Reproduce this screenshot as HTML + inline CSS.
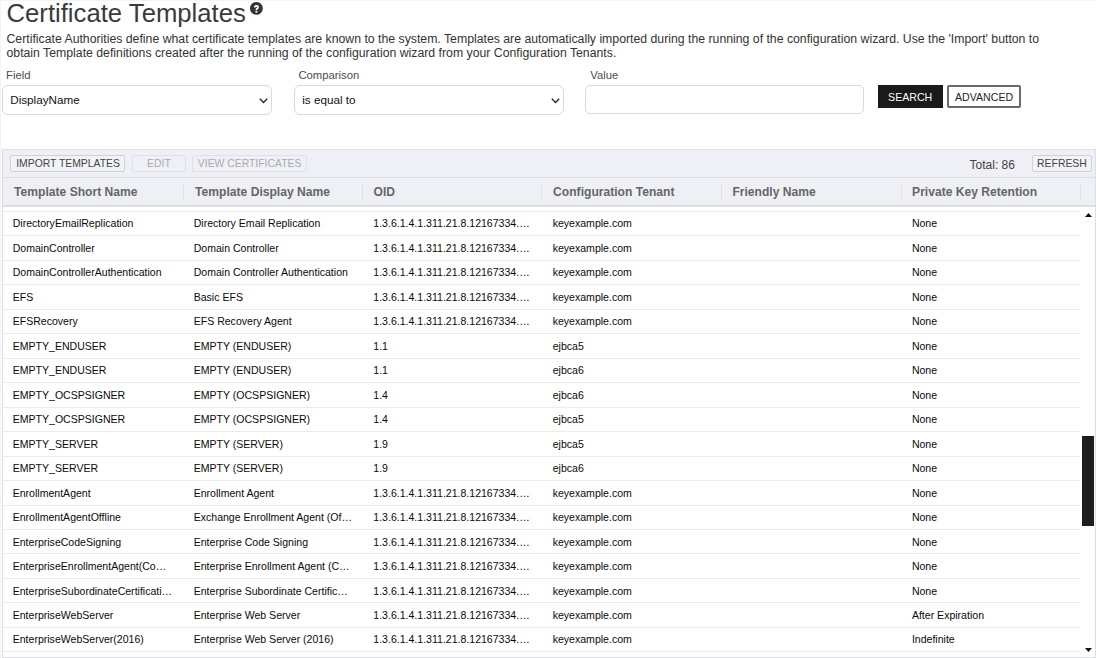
<!DOCTYPE html>
<html><head><meta charset="utf-8">
<style>
*{box-sizing:border-box;margin:0;padding:0}
html,body{width:1096px;height:658px;overflow:hidden;background:#fff}
body{position:relative;font-family:"Liberation Sans",sans-serif;color:#111}
.a{position:absolute;white-space:nowrap;line-height:1}
.frame{position:absolute;left:0;top:0;width:1096px;height:658px;border-left:1px solid #f4f4f4;border-top:1px solid #f4f4f4}
#title{left:6.5px;top:0.9px;font-size:25.7px;color:#3a3a3a}
#help{position:absolute;left:250px;top:2.4px;width:12.8px;height:12.8px}
.desc{font-size:12.27px;color:#333}
.lbl{font-size:11.3px;color:#4d4d4d}
.sel{position:absolute;top:85px;height:30px;border:1px solid #d9d9d9;border-radius:6px;background:#fff}
.sel .t{position:absolute;left:7.2px;top:8.3px;font-size:11.7px;line-height:1;color:#111;white-space:nowrap}
.chev{position:absolute;top:11.6px;width:9px;height:6px}
.btn{position:absolute;font-size:10.6px;line-height:1;text-align:center;white-space:nowrap}
#grid{position:absolute;left:2px;top:149px;width:1094px;height:509px;border:1px solid #dcdee3;overflow:hidden}
#tb{position:absolute;left:0;top:0;width:100%;height:28px;background:#eff0f5;border-bottom:1px solid #dcdee3}
.tbtn{position:absolute;top:5px;height:17px;border:1px solid #cfd1d6;border-radius:2px;font-size:10.4px;line-height:15px;color:#444;padding:0;text-align:center;background:#f2f3f7}
.tbtn.dis{color:#a9abb0;border-color:#dfe1e6;background:#eff0f5}
#hd{position:absolute;left:0;top:28px;width:100%;height:29px;background:#eef0f5;border-bottom:2px solid #dcdee3}
.hc{position:absolute;top:7.5px;font-size:12.1px;font-weight:bold;color:#666;line-height:1;white-space:nowrap}
.sep{position:absolute;top:6.8px;width:1px;height:14.2px;background:#dcdee2}
#rows{position:absolute;left:0;top:57px;width:1077px;height:451px;overflow:hidden}
.r{position:absolute;left:0;width:1077px;height:24.47px;border-top:1px solid #ececec}
.c{position:absolute;top:6.6px;font-size:10.55px;line-height:1;color:#0a0a0a;white-space:nowrap}
#sb{position:absolute;left:1079px;top:57px;width:14px;height:451px}
</style></head><body>
<div class="frame"></div>
<div class="a" id="title">Certificate Templates</div>
<svg id="help" viewBox="0 0 12.8 12.8"><circle cx="6.4" cy="6.4" r="6.4" fill="#333"/><path d="M4.7 5.4 Q4.7 3.8 6.4 3.8 Q8.1 3.8 8.1 5.3 Q8.1 6.2 7.2 6.6 Q6.4 7.0 6.4 7.9" stroke="#fff" stroke-width="1.7" fill="none"/><rect x="5.45" y="8.8" width="1.9" height="1.8" fill="#fff"/></svg>
<div class="a desc" style="left:6.5px;top:33.1px">Certificate Authorities define what certificate templates are known to the system. Templates are automatically imported during the running of the configuration wizard. Use the 'Import' button to</div>
<div class="a desc" style="left:6.5px;top:47.1px">obtain Template definitions created after the running of the configuration wizard from your Configuration Tenants.</div>
<div class="a lbl" style="left:6.1px;top:70.4px">Field</div>
<div class="a lbl" style="left:298.4px;top:70.4px">Comparison</div>
<div class="a lbl" style="left:590.2px;top:70.4px">Value</div>

<div class="sel" style="left:2px;width:270px"><div class="t">DisplayName</div>
<svg class="chev" style="left:256px" viewBox="0 0 9 6"><path d="M0.8 0.8 L4.5 4.5 L8.2 0.8" fill="none" stroke="#222" stroke-width="1.25"/></svg></div>
<div class="sel" style="left:294px;width:270px"><div class="t">is equal to</div>
<svg class="chev" style="left:256px" viewBox="0 0 9 6"><path d="M0.8 0.8 L4.5 4.5 L8.2 0.8" fill="none" stroke="#222" stroke-width="1.25"/></svg></div>
<div class="sel" style="left:585px;width:279px;height:29px;border-radius:5px"></div>

<div class="btn" style="left:877.6px;top:85.4px;width:65.2px;height:22.5px;background:#1a1a1a;color:#fff;line-height:1;padding-top:6.4px">SEARCH</div>
<div class="btn" style="left:947.4px;top:85.3px;width:73.4px;height:22.8px;border:2px solid #6a6a6a;border-radius:2px;color:#222;line-height:1;padding-top:4.7px">ADVANCED</div>

<div id="grid">
 <div id="tb">
  <div class="tbtn" style="left:7.2px;width:114.5px;padding-left:1.2px">IMPORT TEMPLATES</div>
  <div class="tbtn dis" style="left:129.2px;width:53.5px">EDIT</div>
  <div class="tbtn dis" style="left:189.2px;width:114.8px">VIEW CERTIFICATES</div>
  <div class="a" style="left:966.6px;top:8.7px;font-size:12px;color:#444">Total: 86</div>
  <div class="tbtn" style="left:1029.2px;width:59.5px">REFRESH</div>
 </div>
 <div id="hd">
  <div class="hc" style="left:11.1px">Template Short Name</div>
  <div class="sep" style="left:179.9px"></div>
  <div class="hc" style="left:192.1px">Template Display Name</div>
  <div class="sep" style="left:358.8px"></div>
  <div class="hc" style="left:370.6px">OID</div>
  <div class="sep" style="left:538.4px"></div>
  <div class="hc" style="left:550.1px">Configuration Tenant</div>
  <div class="sep" style="left:718.0px"></div>
  <div class="hc" style="left:729.4px">Friendly Name</div>
  <div class="sep" style="left:897.5px"></div>
  <div class="hc" style="left:909.1px">Private Key Retention</div>
  <div class="sep" style="left:1076.5px"></div>
 </div>
 <div id="rows">
  <div class="r" style="top:3.90px"><div class="c" style="left:9.7px">DirectoryEmailReplication</div><div class="c" style="left:190.7px">Directory Email Replication</div><div class="c" style="left:370.3px">1.3.6.1.4.1.311.21.8.12167334.…</div><div class="c" style="left:549.7px">keyexample.com</div><div class="c" style="left:908.9px">None</div></div>
  <div class="r" style="top:28.37px"><div class="c" style="left:9.7px">DomainController</div><div class="c" style="left:190.7px">Domain Controller</div><div class="c" style="left:370.3px">1.3.6.1.4.1.311.21.8.12167334.…</div><div class="c" style="left:549.7px">keyexample.com</div><div class="c" style="left:908.9px">None</div></div>
  <div class="r" style="top:52.84px"><div class="c" style="left:9.7px">DomainControllerAuthentication</div><div class="c" style="left:190.7px">Domain Controller Authentication</div><div class="c" style="left:370.3px">1.3.6.1.4.1.311.21.8.12167334.…</div><div class="c" style="left:549.7px">keyexample.com</div><div class="c" style="left:908.9px">None</div></div>
  <div class="r" style="top:77.31px"><div class="c" style="left:9.7px">EFS</div><div class="c" style="left:190.7px">Basic EFS</div><div class="c" style="left:370.3px">1.3.6.1.4.1.311.21.8.12167334.…</div><div class="c" style="left:549.7px">keyexample.com</div><div class="c" style="left:908.9px">None</div></div>
  <div class="r" style="top:101.78px"><div class="c" style="left:9.7px">EFSRecovery</div><div class="c" style="left:190.7px">EFS Recovery Agent</div><div class="c" style="left:370.3px">1.3.6.1.4.1.311.21.8.12167334.…</div><div class="c" style="left:549.7px">keyexample.com</div><div class="c" style="left:908.9px">None</div></div>
  <div class="r" style="top:126.25px"><div class="c" style="left:9.7px">EMPTY_ENDUSER</div><div class="c" style="left:190.7px">EMPTY (ENDUSER)</div><div class="c" style="left:370.3px">1.1</div><div class="c" style="left:549.7px">ejbca5</div><div class="c" style="left:908.9px">None</div></div>
  <div class="r" style="top:150.72px"><div class="c" style="left:9.7px">EMPTY_ENDUSER</div><div class="c" style="left:190.7px">EMPTY (ENDUSER)</div><div class="c" style="left:370.3px">1.1</div><div class="c" style="left:549.7px">ejbca6</div><div class="c" style="left:908.9px">None</div></div>
  <div class="r" style="top:175.19px"><div class="c" style="left:9.7px">EMPTY_OCSPSIGNER</div><div class="c" style="left:190.7px">EMPTY (OCSPSIGNER)</div><div class="c" style="left:370.3px">1.4</div><div class="c" style="left:549.7px">ejbca6</div><div class="c" style="left:908.9px">None</div></div>
  <div class="r" style="top:199.66px"><div class="c" style="left:9.7px">EMPTY_OCSPSIGNER</div><div class="c" style="left:190.7px">EMPTY (OCSPSIGNER)</div><div class="c" style="left:370.3px">1.4</div><div class="c" style="left:549.7px">ejbca5</div><div class="c" style="left:908.9px">None</div></div>
  <div class="r" style="top:224.13px"><div class="c" style="left:9.7px">EMPTY_SERVER</div><div class="c" style="left:190.7px">EMPTY (SERVER)</div><div class="c" style="left:370.3px">1.9</div><div class="c" style="left:549.7px">ejbca5</div><div class="c" style="left:908.9px">None</div></div>
  <div class="r" style="top:248.60px"><div class="c" style="left:9.7px">EMPTY_SERVER</div><div class="c" style="left:190.7px">EMPTY (SERVER)</div><div class="c" style="left:370.3px">1.9</div><div class="c" style="left:549.7px">ejbca6</div><div class="c" style="left:908.9px">None</div></div>
  <div class="r" style="top:273.07px"><div class="c" style="left:9.7px">EnrollmentAgent</div><div class="c" style="left:190.7px">Enrollment Agent</div><div class="c" style="left:370.3px">1.3.6.1.4.1.311.21.8.12167334.…</div><div class="c" style="left:549.7px">keyexample.com</div><div class="c" style="left:908.9px">None</div></div>
  <div class="r" style="top:297.54px"><div class="c" style="left:9.7px">EnrollmentAgentOffline</div><div class="c" style="left:190.7px">Exchange Enrollment Agent (Of…</div><div class="c" style="left:370.3px">1.3.6.1.4.1.311.21.8.12167334.…</div><div class="c" style="left:549.7px">keyexample.com</div><div class="c" style="left:908.9px">None</div></div>
  <div class="r" style="top:322.01px"><div class="c" style="left:9.7px">EnterpriseCodeSigning</div><div class="c" style="left:190.7px">Enterprise Code Signing</div><div class="c" style="left:370.3px">1.3.6.1.4.1.311.21.8.12167334.…</div><div class="c" style="left:549.7px">keyexample.com</div><div class="c" style="left:908.9px">None</div></div>
  <div class="r" style="top:346.48px"><div class="c" style="left:9.7px">EnterpriseEnrollmentAgent(Co…</div><div class="c" style="left:190.7px">Enterprise Enrollment Agent (C…</div><div class="c" style="left:370.3px">1.3.6.1.4.1.311.21.8.12167334.…</div><div class="c" style="left:549.7px">keyexample.com</div><div class="c" style="left:908.9px">None</div></div>
  <div class="r" style="top:370.95px"><div class="c" style="left:9.7px">EnterpriseSubordinateCertificati…</div><div class="c" style="left:190.7px">Enterprise Subordinate Certific…</div><div class="c" style="left:370.3px">1.3.6.1.4.1.311.21.8.12167334.…</div><div class="c" style="left:549.7px">keyexample.com</div><div class="c" style="left:908.9px">None</div></div>
  <div class="r" style="top:395.42px"><div class="c" style="left:9.7px">EnterpriseWebServer</div><div class="c" style="left:190.7px">Enterprise Web Server</div><div class="c" style="left:370.3px">1.3.6.1.4.1.311.21.8.12167334.…</div><div class="c" style="left:549.7px">keyexample.com</div><div class="c" style="left:908.9px">After Expiration</div></div>
  <div class="r" style="top:419.89px"><div class="c" style="left:9.7px">EnterpriseWebServer(2016)</div><div class="c" style="left:190.7px">Enterprise Web Server (2016)</div><div class="c" style="left:370.3px">1.3.6.1.4.1.311.21.8.12167334.…</div><div class="c" style="left:549.7px">keyexample.com</div><div class="c" style="left:908.9px">Indefinite</div></div>
  <div class="r" style="top:444.36px"></div>
 </div>
 <div id="sb">
  <svg style="position:absolute;left:3px;top:5.5px" width="7" height="4" viewBox="0 0 7 4"><path d="M0 4 L3.5 0 L7 4Z" fill="#111"/></svg>
  <div style="position:absolute;left:0px;top:229px;width:12px;height:90px;background:#1e1e1e"></div>
  <svg style="position:absolute;left:3px;top:440.5px" width="7" height="4" viewBox="0 0 7 4"><path d="M0 0 L3.5 4 L7 0Z" fill="#111"/></svg>
 </div>
</div>
</body></html>
